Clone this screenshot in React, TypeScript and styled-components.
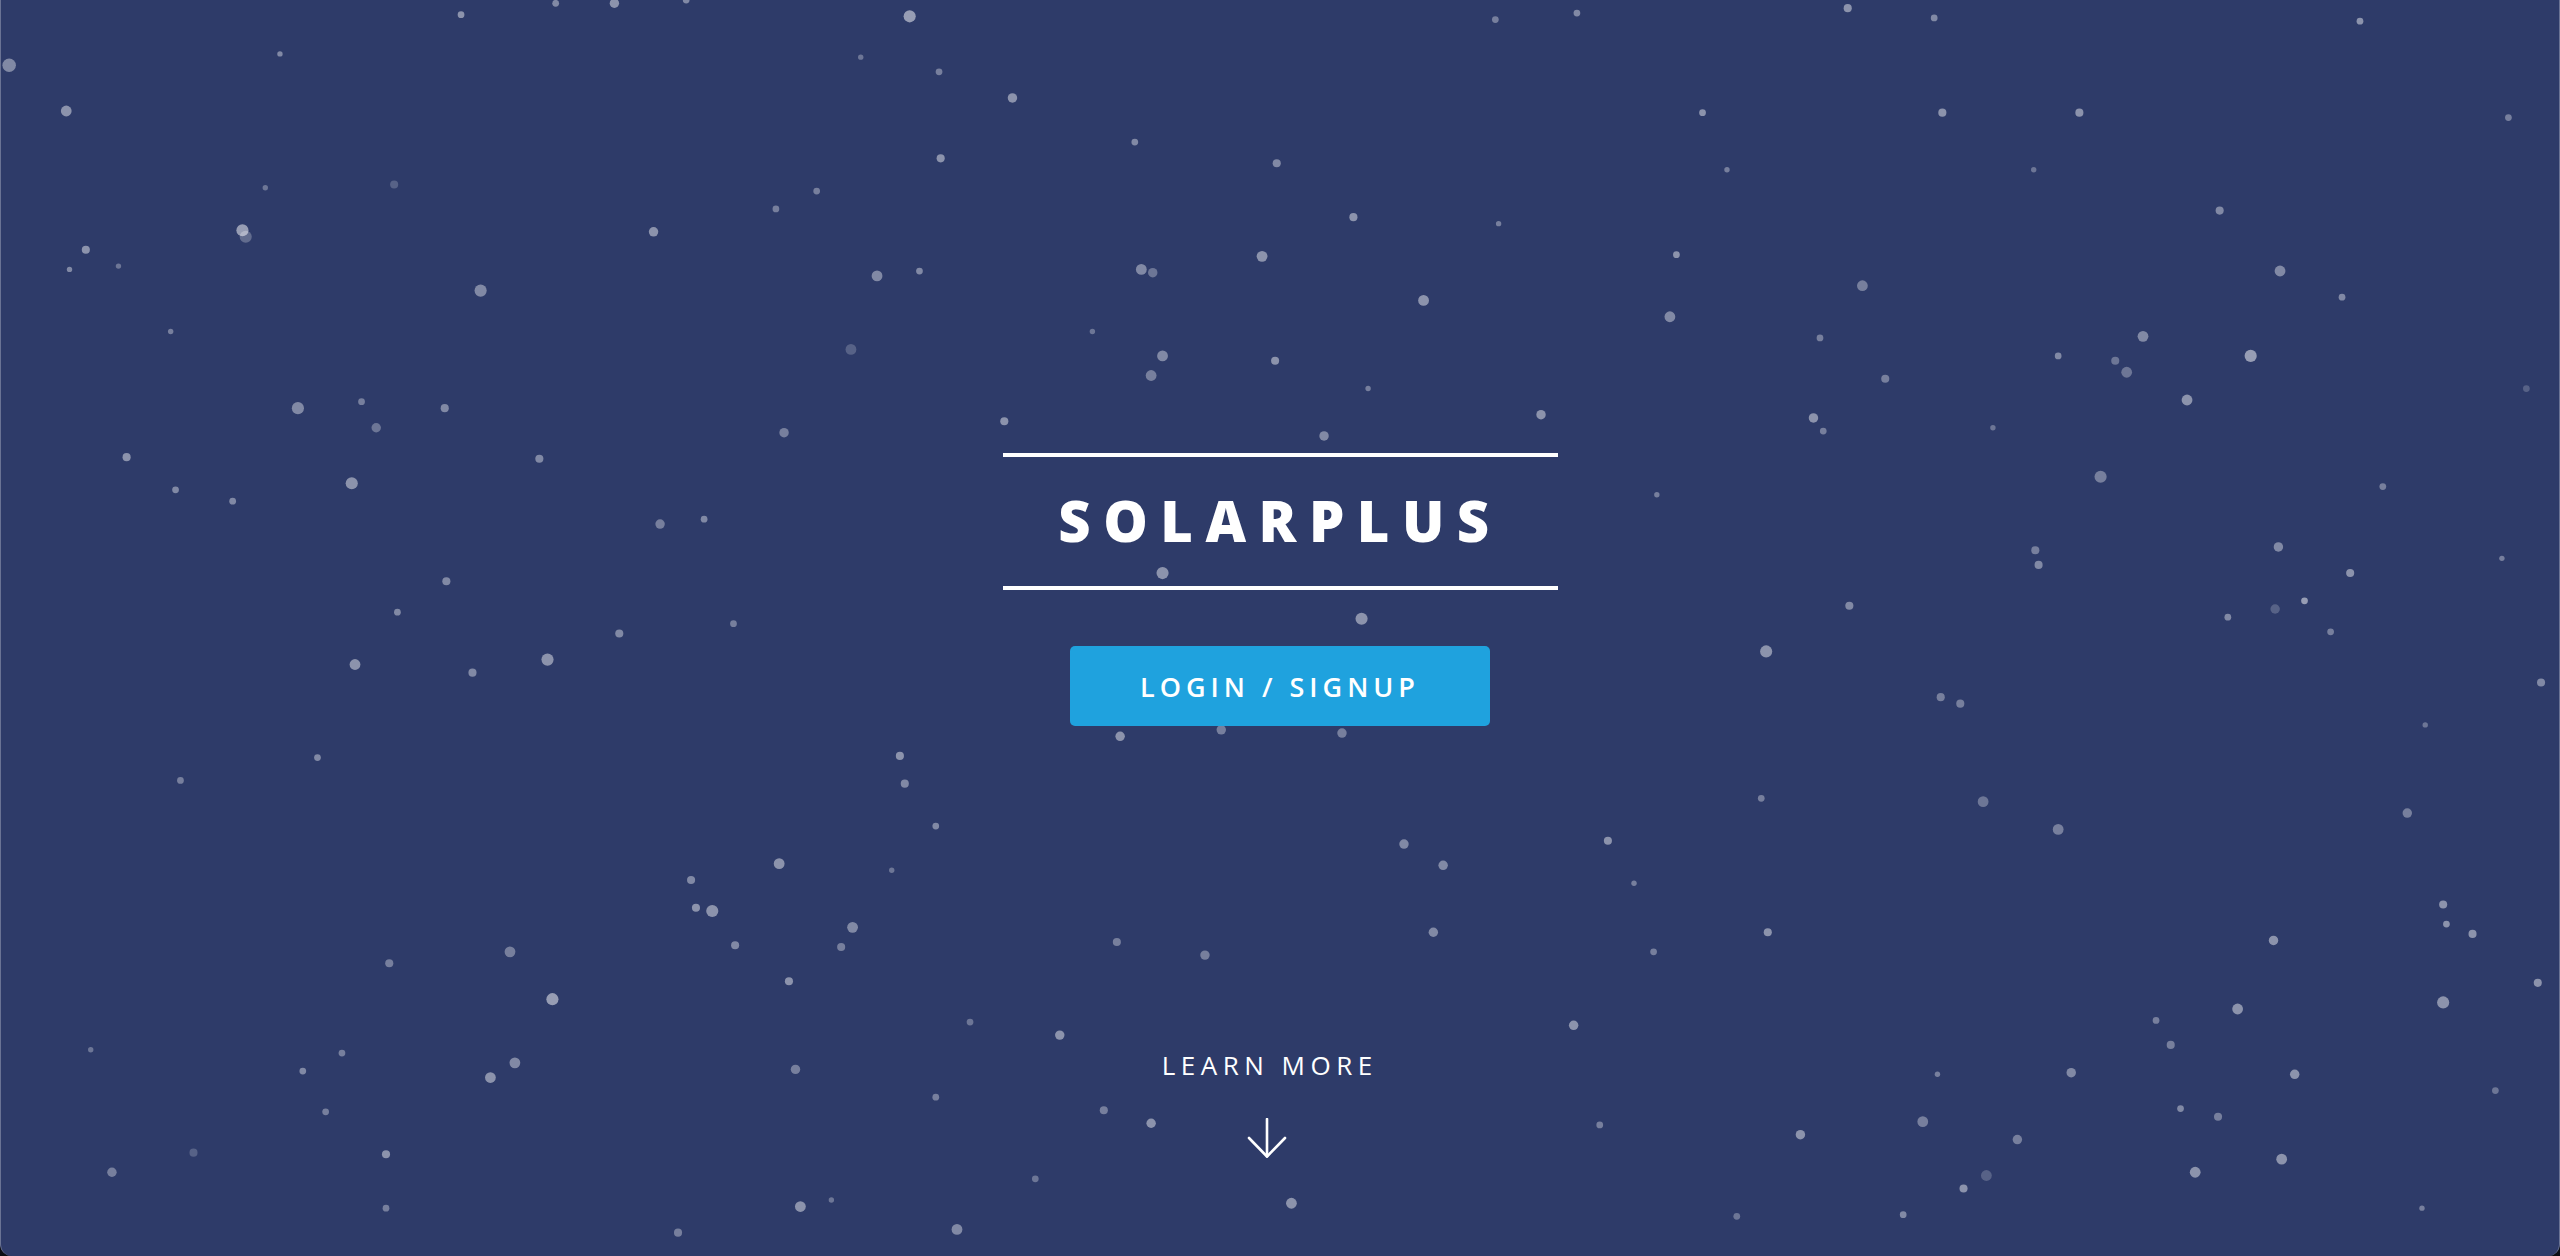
import React from "react";
import styled, { createGlobalStyle } from "styled-components";

const GlobalStyle = createGlobalStyle`
  html, body {
    margin: 0;
    padding: 0;
    background: #0b0d14;
  }
  * { box-sizing: border-box; }
  body {
    font-family: "Open Sans", "Noto Sans", "Liberation Sans", sans-serif;
    -webkit-font-smoothing: antialiased;
  }
`;

const S = 2560 / 1568;
const R = 1.35;

const STARS: [number, number, number, number][] = [
  [282,9,2.5,.45],[340,2,2.5,.4],[376,2,3.5,.45],[420,0,2.5,.4],[557,10,4.5,.5],[916,12,2.5,.35],
  [966,8,2.5,.4],[1132,5,3,.45],[1185,11,2.5,.4],[1446,13,2.5,.45],[5,40,5,.4],[40,68,4,.45],
  [171,33,2,.4],[575,44,2.5,.35],[620,60,3.5,.45],[527,35,2,.3],[695,87,2.5,.4],[576,97,3,.45],
  [782,100,3,.4],[1043,69,2.5,.45],[1190,69,3,.45],[1274,69,3,.45],[1537,72,2.5,.35],[1058,104,2,.35],
  [1246,104,2,.3],[241,113,3,.2],[162,115,2,.3],[475,128,2.5,.35],[500,117,2.5,.35],[148,141,4.5,.5],
  [150,145,4.5,.25],[400,142,3.5,.45],[52,153,3,.45],[42,165,2,.4],[72,163,2,.3],[829,133,3,.45],
  [918,137,2,.35],[773,157,4,.45],[699,165,4,.4],[706,167,3.5,.3],[537,169,4,.4],[563,166,2.5,.4],
  [1027,156,2.5,.45],[1141,175,4,.35],[1397,166,4,.4],[1360,129,3,.4],[1435,182,2.5,.4],[294,178,4.5,.4],
  [104,203,2,.35],[872,184,4,.45],[1023,194,4,.4],[669,203,2,.3],[521,214,4,.2],[712,218,4,.4],
  [781,221,3,.45],[1115,207,2.5,.35],[1313,206,4,.4],[1303,228,4,.3],[1296,221,3,.3],[1379,218,4.5,.5],
  [1261,218,2.5,.4],[1155,232,3,.35],[705,230,4,.35],[838,238,2,.35],[182,250,4.5,.4],[221,246,2.5,.35],
  [272,250,3,.4],[944,254,3.5,.45],[1111,256,3.5,.45],[1340,245,4,.45],[1548,238,2.5,.2],[230,262,3.5,.3],
  [480,265,3.5,.35],[615,258,3,.45],[811,267,3.5,.4],[1117,264,2.5,.35],[1221,262,2,.3],[77,280,3,.45],
  [330,281,3,.4],[215,296,4.5,.45],[107,300,2.5,.4],[142,307,2.5,.4],[1287,292,4.5,.35],[1015,303,2,.35],
  [1460,298,2.5,.35],[404,321,3.5,.35],[431,318,2.5,.4],[1247,337,3,.35],[1249,346,3,.4],[1396,335,3.5,.4],
  [1440,351,3,.45],[1533,342,2,.35],[273,356,3,.4],[712,351,4.5,.45],[834,379,4.5,.45],[243,375,2.5,.4],
  [449,382,2.5,.35],[379,388,3,.4],[1133,371,3,.4],[1412,368,2.5,.5],[1365,378,2.5,.4],[1394,373,3.5,.2],
  [1428,387,2.5,.35],[335,404,4.5,.45],[217,407,4,.45],[289,412,3,.4],[1082,399,4.5,.45],[1189,427,3,.35],
  [1201,431,3,.35],[1557,418,3,.4],[748,447,3.5,.35],[686,451,3.5,.45],[822,449,3.5,.35],[194,464,2.5,.4],
  [551,463,3,.45],[554,480,3,.4],[110,478,2.5,.35],[1486,444,2,.3],[1079,489,2.5,.35],[1215,491,4,.3],
  [573,506,2.5,.4],[1261,508,4,.35],[1475,498,3.5,.35],[985,515,3,.45],[860,517,3.5,.4],[477,529,4,.45],
  [884,530,3.5,.4],[423,539,3,.4],[546,533,2,.3],[426,556,3,.45],[436,558,4.5,.45],[1001,541,2,.35],
  [1497,554,3,.45],[1499,566,2.5,.45],[1515,572,3,.45],[522,568,4,.4],[515,580,3,.35],[450,579,3,.4],
  [878,571,3.5,.4],[1083,571,3,.45],[1393,576,3.5,.45],[312,583,4,.35],[238,590,3,.35],[738,585,3.5,.35],
  [684,577,3,.35],[1013,583,2.5,.35],[1555,602,3,.45],[483,601,3,.45],[338,612,4.5,.5],[1497,614,4.5,.45],
  [1371,618,4,.45],[964,628,3.5,.45],[649,634,3.5,.45],[594,626,2.5,.3],[1321,625,2.5,.35],[1330,640,3,.35],
  [55,643,2,.3],[185,656,2.5,.4],[209,645,2.5,.35],[300,660,4,.45],[315,651,4,.4],[487,655,3.5,.35],
  [1269,657,3.5,.4],[1406,658,3.5,.45],[1187,658,2,.35],[1529,668,2.5,.3],[573,672,2.5,.35],[676,680,3,.35],
  [705,688,3.5,.45],[1178,687,4,.35],[1336,679,2.5,.4],[1359,684,3,.35],[1103,695,3.5,.45],[1236,698,3.5,.35],
  [980,689,2.5,.35],[199,681,2.5,.35],[118,706,3,.2],[236,707,3,.45],[68,718,3.5,.35],[1345,718,4,.45],
  [1398,710,4,.45],[1203,728,3,.45],[1217,720,4,.2],[490,739,4,.45],[791,737,4,.45],[586,753,4,.4],
  [634,722,2.5,.3],[1166,744,2.5,.4],[236,740,2.5,.35],[415,755,3,.35],[1064,745,2.5,.3],[1484,740,2,.35],
  [509,735,2,.3],
];

const Page = styled.main`
  position: relative;
  height: 1256px;
  width: 100%;
  overflow: hidden;
  background: #2e3b69;
  border-left: 1px solid #6a7394;
  border-right: 1px solid #6a7394;
  border-bottom-left-radius: 12px;
  border-bottom-right-radius: 12px;
  display: flex;
  flex-direction: column;
  align-items: center;
  color: #ffffff;
`;

const Starfield = styled.svg`
  position: absolute;
  inset: 0;
  width: 100%;
  height: 100%;
  pointer-events: none;
`;

const Hero = styled.section`
  position: relative;
  display: flex;
  flex-direction: column;
  align-items: center;
  padding-top: 453px;
`;

const TitleFrame = styled.div`
  width: 555px;
  border-top: 4px solid #ffffff;
  border-bottom: 4px solid #ffffff;
  padding: 35px 0 38px;
  display: flex;
  justify-content: center;
`;

const Title = styled.h1`
  margin: 0;
  font-family: "Open Sans", "Noto Sans", sans-serif;
  font-weight: 800;
  font-size: 56px;
  line-height: 1;
  letter-spacing: 12.5px;
  color: #ffffff;
`;

const LoginButton = styled.button`
  margin-top: 56px;
  width: 420px;
  height: 80px;
  border: none;
  border-radius: 5px;
  background: #1fa2de;
  color: #ffffff;
  font-family: "Open Sans", "Noto Sans", sans-serif;
  font-weight: 600;
  font-size: 27px;
  letter-spacing: 5px;
  cursor: pointer;
  display: flex;
  align-items: center;
  justify-content: center;
  padding: 0;
`;

const Spacer = styled.div`
  flex: 1;
`;

const LearnMore = styled.a`
  position: relative;
  display: flex;
  flex-direction: column;
  align-items: center;
  gap: 40px;
  margin-right: 26px;
  padding-bottom: 98px;
  color: #ffffff;
  text-decoration: none;
`;

const LearnLabel = styled.span`
  font-family: "Open Sans", "Noto Sans", sans-serif;
  font-weight: 400;
  font-size: 26px;
  line-height: 1;
  letter-spacing: 5.5px;
  margin-right: -5.5px;
`;

const Arrow = () => (
  <svg width="40" height="40" viewBox="0 0 40 40" fill="none" stroke="#ffffff" strokeWidth="2.6" strokeLinecap="round" strokeLinejoin="round">
    <path d="M20 1 V38.5" />
    <path d="M2 20 L20 38.5 L38 20" />
  </svg>
);

export default function App() {
  return (
    <>
      <GlobalStyle />
      <Page>
        <Starfield viewBox="0 0 2560 1256" preserveAspectRatio="none">
          {STARS.map(([x, y, r, a], i) => (
            <circle key={i} cx={x * S} cy={y * S} r={r * R} fill="#ffffff" fillOpacity={a} />
          ))}
        </Starfield>
        <Hero>
          <TitleFrame>
            <Title>SOLARPLUS</Title>
          </TitleFrame>
          <LoginButton>LOGIN / SIGNUP</LoginButton>
        </Hero>
        <Spacer />
        <LearnMore href="#">
          <LearnLabel>LEARN MORE</LearnLabel>
          <Arrow />
        </LearnMore>
      </Page>
    </>
  );
}
